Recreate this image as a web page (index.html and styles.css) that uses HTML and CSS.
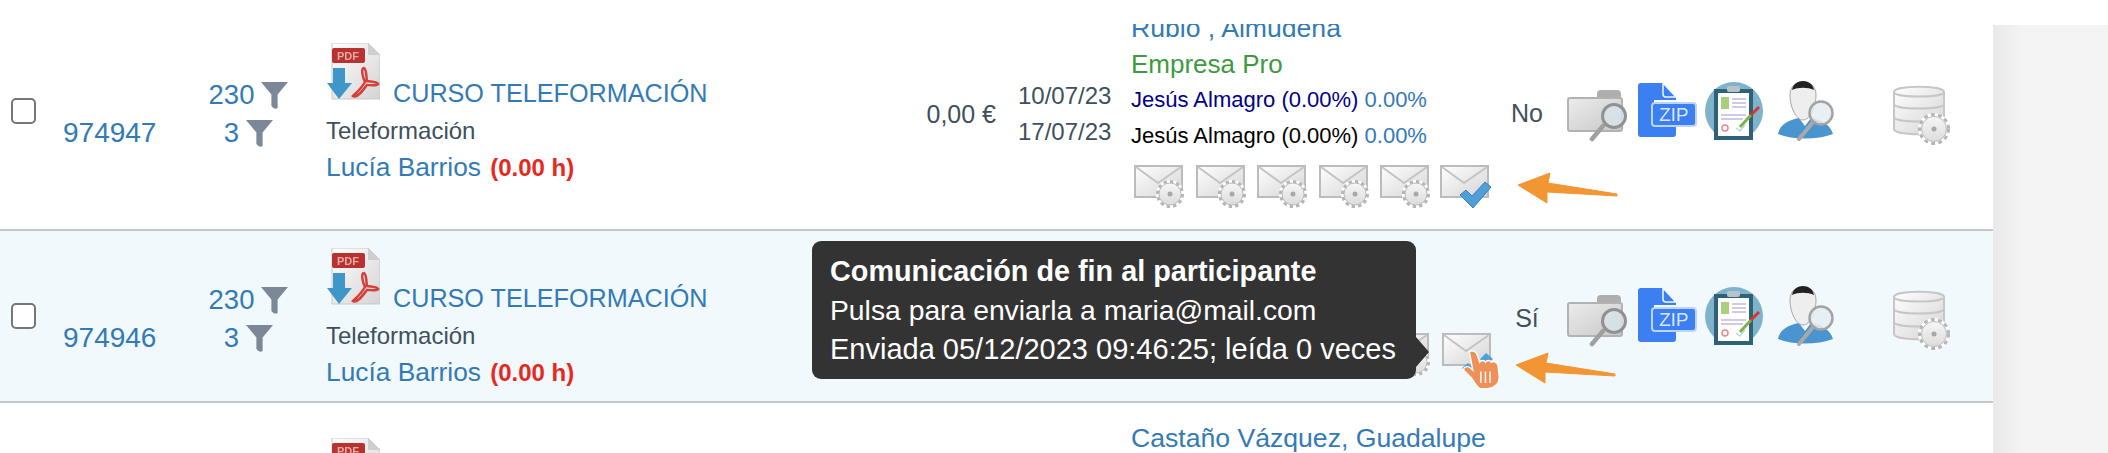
FILE: index.html
```html
<!DOCTYPE html>
<html>
<head>
  <meta charset="UTF-8">
  <title>Cursos</title>
  <link rel="stylesheet" href="styles.css">
</head>
<body>
  <svg class="sprites" width="0" height="0">
    <defs>
      <linearGradient id="paper" x1="0" y1="0" x2="1" y2="1">
        <stop offset="0" stop-color="#ffffff"/>
        <stop offset="1" stop-color="#d4d4d4"/>
      </linearGradient>
      <linearGradient id="metal" x1="0" y1="0" x2="0" y2="1">
        <stop offset="0" stop-color="#f6f6f6"/>
        <stop offset="1" stop-color="#dcdcdc"/>
      </linearGradient>
      <linearGradient id="folder-body" x1="0" y1="0" x2="1" y2="1">
        <stop offset="0" stop-color="#ececec"/>
        <stop offset="1" stop-color="#c8c8c8"/>
      </linearGradient>

      <symbol id="funnel" viewBox="0 0 26 26">
        <path d="M0 0H26L16 12V25Q13 27 10 23V12Z" fill="#7c8797"/>
      </symbol>

      <symbol id="pdf" viewBox="0 0 54 59">
        <path d="M6 0H42L54 12V56H6Z" fill="url(#paper)" stroke="#c9c9c9"/>
        <path d="M42 0V12H54Z" fill="#cfcfcf"/>
        <rect x="6" y="5" width="33" height="15" rx="2" fill="#b8322f"/>
        <text x="22" y="17" class="pdf-label">PDF</text>
        <path d="M7 25H19V40H26L13 56L1 40H7Z" fill="#3f97c9"/>
        <path d="M38 25C35 25 36 33 39 39C35 46 30 50 27 53C31 56 37 47 41 42C45 42 50 43 52 41C50 38 44 39 41 38C40 34 41 27 38 25Z" fill="none" stroke="#d4403a" stroke-width="2.5"/>
      </symbol>

      <symbol id="mail-body" viewBox="0 0 50 43">
        <rect x="1" y="1" width="47" height="31" fill="url(#paper)" stroke="#bcbcbc" stroke-width="2"/>
        <path d="M2 2L24 18L47 2" fill="none" stroke="#c4c4c4" stroke-width="2"/>
      </symbol>

      <symbol id="mail-gear" viewBox="0 0 50 43">
        <use href="#mail-body" width="50" height="43"/>
        <circle cx="36" cy="29" r="14" fill="#ffffff"/>
        <circle cx="36" cy="29" r="12.5" fill="none" stroke="#b5b5b5" stroke-width="3" stroke-dasharray="3.4 3.1"/>
        <circle cx="36" cy="29" r="11" fill="url(#metal)" stroke="#bcbcbc"/>
        <circle cx="36" cy="29" r="2.5" fill="#a8a8a8"/>
      </symbol>

      <symbol id="mail-check" viewBox="0 0 52 43">
        <use href="#mail-body" width="50" height="43"/>
        <path d="M20 30L26 25L32 31L45 17L51 22L33 43Z" fill="#4f9fd8" stroke="#3b7fb5"/>
      </symbol>

      <symbol id="mail-hand" viewBox="0 0 60 56">
        <use href="#mail-body" width="50" height="43"/>
        <path d="M44 20L51 26L44 32L38 26Z" fill="#4f9fd8"/>
        <path d="M26 30L32 35L26 41L20 35Z" fill="#4f9fd8"/>
        <g transform="translate(-6 -3) scale(1.15)">
          <path d="M29 19C32 17 35 19 36 22L38 28C39 26 42 26 43 28C44 26 47 26 48 28C49 27 53 27 54 31L55 41C55 47 50 51 45 51H38C35 49 33 45 31 42L24 35C24 31 29 31 31 34L32 35Z" fill="#ee9159" stroke="#ffffff" stroke-width="1.2"/>
          <path d="M39 36V46M43 36V46M47 36V46" stroke="#ffffff" stroke-width="1.2"/>
        </g>
      </symbol>

      <symbol id="folder" viewBox="0 0 60 66">
        <path d="M30 14Q30 10 34 10H50Q54 10 54 14V20H30Z" fill="#aeaeae"/>
        <rect x="1" y="18" width="54" height="33" rx="2" fill="url(#folder-body)" stroke="#b2b2b2" stroke-width="2"/>
        <path d="M36 46L25 59" stroke="#a0a0a0" stroke-width="4.5" stroke-linecap="round"/>
        <circle cx="47" cy="36" r="11.5" fill="#d7e4ea" fill-opacity="0.8" stroke="#919191" stroke-width="3"/>
      </symbol>

      <symbol id="zip" viewBox="0 0 59 66">
        <path d="M3 3H25L38 17V20H16V41H38V54Q38 57 35 57H3Q0 57 0 54V6Q0 3 3 3Z" fill="#3b7ff2"/>
        <path d="M25 3V14Q25 17 28 17H38Z" fill="#3b7ff2" stroke="#f3f8ff" stroke-width="1.5"/>
        <rect x="14" y="23" width="44" height="23" rx="3" fill="#3b7ff2" stroke="#bcd4fb" stroke-width="2"/>
        <text x="36" y="41" class="zip-label">ZIP</text>
      </symbol>

      <symbol id="clipboard" viewBox="0 0 58 66">
        <circle cx="29" cy="31" r="29" fill="#7fb3cc"/>
        <rect x="9" y="9" width="39" height="51" fill="#2f6278"/>
        <rect x="13" y="13" width="31" height="43" fill="#ffffff"/>
        <rect x="22" y="6" width="13" height="6" rx="2" fill="#b9c4c9"/>
        <rect x="16" y="17" width="8" height="12" fill="#a9cf7d"/>
        <path d="M27 19H41M27 23H41M27 27H41M16 35H41M16 39H38" stroke="#c5b8e0" stroke-width="1.5"/>
        <circle cx="20" cy="48" r="3" fill="none" stroke="#e58a8a" stroke-width="1.5"/>
        <path d="M31 48L35 51L40 45" fill="none" stroke="#c0d6de" stroke-width="1.5"/>
        <path d="M35 47L46 35" stroke="#7cb24a" stroke-width="3"/>
        <path d="M46 35L54 27" stroke="#d9352c" stroke-width="3"/>
      </symbol>

      <symbol id="user" viewBox="0 0 58 66">
        <path d="M1 54C3 44 12 40 22 38L28 46L34 38C44 40 53 44 56 54C40 60 16 60 1 54Z" fill="#4a94cf"/>
        <path d="M13 15C13 6 19 2 26 2C33 2 39 6 39 15C39 27 33 40 26 40C19 40 13 27 13 15Z" fill="#eeeeee" stroke="#a5a5a5"/>
        <path d="M15 10C16 4 21 1 26 1C31 1 36 4 37 10C31 7 21 7 15 10Z" fill="#222222"/>
        <path d="M36 42L22 59" stroke="#a9a9a9" stroke-width="4" stroke-linecap="round"/>
        <circle cx="44" cy="33" r="11.5" fill="#e4edf2" fill-opacity="0.85" stroke="#a3a3a3" stroke-width="2.5"/>
      </symbol>

      <symbol id="db" viewBox="0 0 58 66">
        <path d="M1 12C1 5 51 5 51 12V49C51 56 1 56 1 49Z" fill="url(#paper)" stroke="#c6c6c6" stroke-width="2"/>
        <path d="M1 12C1 18 51 18 51 12M1 24C1 30 51 30 51 24M1 37C1 43 51 43 51 37" fill="none" stroke="#c6c6c6" stroke-width="2"/>
        <circle cx="41" cy="49" r="16" fill="#ffffff"/>
        <circle cx="41" cy="49" r="14.5" fill="none" stroke="#b5b5b5" stroke-width="3" stroke-dasharray="3.8 3.4"/>
        <circle cx="41" cy="49" r="12.5" fill="url(#metal)" stroke="#bcbcbc"/>
        <circle cx="41" cy="49" r="2.5" fill="#a8a8a8"/>
      </symbol>

      <symbol id="arrow" viewBox="0 0 115 40">
        <path d="M8 15L40 3L38 13L107 24V26L37 22L37 33Z" fill="#f29533" stroke="#f29533" stroke-linejoin="round"/>
      </symbol>
    </defs>
  </svg>

  <div class="page">
    <div class="table-wrap">
      <div class="rows">

        <div class="row row-first">
          <div class="cell-check"><input type="checkbox" class="check"></div>
          <div class="cell-id"><a class="link">974947</a></div>
          <div class="cell-counts">
            <div class="count"><a class="link">230</a><svg class="funnel"><use href="#funnel"/></svg></div>
            <div class="count"><a class="link">3</a><svg class="funnel"><use href="#funnel"/></svg></div>
          </div>
          <div class="cell-course">
            <div class="course-title"><svg class="pdf"><use href="#pdf"/></svg> <a class="link">CURSO TELEFORMACIÓN</a></div>
            <div class="course-type">Teleformación</div>
            <div class="course-tutor"><a class="link">Lucía Barrios</a> <span class="hours">(0.00 h)</span></div>
          </div>
          <div class="cell-price">0,00 €</div>
          <div class="cell-dates">
            <div>10/07/23</div>
            <div>17/07/23</div>
          </div>
          <div class="cell-people">
            <div class="person-name"><a class="link">Rubio , Almudena</a></div>
            <div class="person-company">Empresa Pro</div>
            <div class="person-tutor tutor-blue">Jesús Almagro (0.00%) <a class="link">0.00%</a></div>
            <div class="person-tutor">Jesús Almagro (0.00%) <a class="link">0.00%</a></div>
            <div class="mails">
              <svg class="mail"><use href="#mail-gear"/></svg>
              <svg class="mail"><use href="#mail-gear"/></svg>
              <svg class="mail"><use href="#mail-gear"/></svg>
              <svg class="mail"><use href="#mail-gear"/></svg>
              <svg class="mail"><use href="#mail-gear"/></svg>
              <svg class="mail mail-last"><use href="#mail-check"/></svg>
            </div>
          </div>
          <div class="cell-answer">No</div>
          <div class="cell-tools">
            <svg class="tool tool-folder"><use href="#folder"/></svg>
            <svg class="tool tool-zip"><use href="#zip"/></svg>
            <svg class="tool tool-clipboard"><use href="#clipboard"/></svg>
            <svg class="tool tool-user"><use href="#user"/></svg>
            <svg class="tool tool-db"><use href="#db"/></svg>
          </div>
          <svg class="note-arrow arrow-first"><use href="#arrow"/></svg>
        </div>

        <div class="row row-hover">
          <div class="cell-check"><input type="checkbox" class="check"></div>
          <div class="cell-id"><a class="link">974946</a></div>
          <div class="cell-counts">
            <div class="count"><a class="link">230</a><svg class="funnel"><use href="#funnel"/></svg></div>
            <div class="count"><a class="link">3</a><svg class="funnel"><use href="#funnel"/></svg></div>
          </div>
          <div class="cell-course">
            <div class="course-title"><svg class="pdf"><use href="#pdf"/></svg> <a class="link">CURSO TELEFORMACIÓN</a></div>
            <div class="course-type">Teleformación</div>
            <div class="course-tutor"><a class="link">Lucía Barrios</a> <span class="hours">(0.00 h)</span></div>
          </div>
          <div class="cell-price"></div>
          <div class="cell-dates"></div>
          <div class="cell-people people-end">
            <div class="mails">
              <svg class="mail"><use href="#mail-gear"/></svg>
              <svg class="mail"><use href="#mail-gear"/></svg>
              <svg class="mail"><use href="#mail-gear"/></svg>
              <svg class="mail"><use href="#mail-gear"/></svg>
              <svg class="mail"><use href="#mail-gear"/></svg>
              <svg class="mail mail-hand"><use href="#mail-hand"/></svg>
            </div>
          </div>
          <div class="cell-answer">Sí</div>
          <div class="cell-tools">
            <svg class="tool tool-folder"><use href="#folder"/></svg>
            <svg class="tool tool-zip"><use href="#zip"/></svg>
            <svg class="tool tool-clipboard"><use href="#clipboard"/></svg>
            <svg class="tool tool-user"><use href="#user"/></svg>
            <svg class="tool tool-db"><use href="#db"/></svg>
          </div>
          <svg class="note-arrow arrow-second"><use href="#arrow"/></svg>
          <div class="tooltip">
            <div class="tooltip-title">Comunicación de fin al participante</div>
            <div class="tooltip-mail">Pulsa para enviarla a maria@mail.com</div>
            <div class="tooltip-sent">Enviada 05/12/2023 09:46:25; leída 0 veces</div>
          </div>
        </div>

        <div class="row row-last">
          <div class="cell-check"></div>
          <div class="cell-id"></div>
          <div class="cell-counts"></div>
          <div class="cell-course course-top"><svg class="pdf"><use href="#pdf"/></svg></div>
          <div class="cell-price"></div>
          <div class="cell-dates"></div>
          <div class="cell-people">
            <div class="person-name"><a class="link">Castaño Vázquez, Guadalupe</a></div>
          </div>
        </div>

      </div>
    </div>
    <div class="side"></div>
  </div>
</body>
</html>
```

FILE: styles.css
```css
:root {
  --link: #337ab7;
  --text: #3f505c;
  --border: #c6c8ca;
  --hover: #f1f9fd;
}

html, body {
  margin: 0;
  height: 453px;
  overflow: hidden;
  background: white;
}

body {
  font-family: "Liberation Sans", Arial, sans-serif;
  color: var(--text);
}

.sprites {
  position: absolute;
}

.pdf-label {
  font-family: "Liberation Sans", Arial, sans-serif;
  font-size: 11px;
  font-weight: bold;
  fill: #e6a9a4;
  text-anchor: middle;
}

.zip-label {
  font-family: "Liberation Sans", Arial, sans-serif;
  font-size: 19px;
  fill: #dbe8fd;
  text-anchor: middle;
}

.page {
  display: flex;
  height: 453px;
}

.table-wrap {
  width: 1993px;
  height: 429px;
  margin-top: 24px;
  overflow: hidden;
}

.rows {
  margin-top: -31px;
}

.side {
  flex: 1;
  margin-top: 25px;
  background: linear-gradient(to right, #e9e9e9, #f4f4f4 30px);
}

.row {
  position: relative;
  display: grid;
  grid-template-columns: 63px 107px 156px 592px 88px 125px 371px 50px 441px;
  border-bottom: 2px solid var(--border);
}

.row-first { height: 236px; }
.row-hover { height: 170px; background: var(--hover); }
.row-last { height: 198px; border-bottom: 0; }

.link {
  color: var(--link);
  text-decoration: none;
}

.cell-check {
  align-self: center;
  padding-left: 11px;
  display: flex;
}

.check {
  appearance: none;
  width: 25px;
  height: 26px;
  margin: 0;
  background: white;
  border: 2px solid #767676;
  border-radius: 5px;
}

.cell-id {
  align-self: center;
  margin-top: 44px;
  font-size: 28px;
  line-height: 36px;
}

.cell-counts {
  align-self: center;
  margin-top: 6px;
  margin-left: 1px;
  font-size: 27.5px;
}

.count {
  display: flex;
  justify-content: center;
  align-items: center;
  gap: 7px;
  height: 38px;
}

.funnel {
  width: 27px;
  height: 27px;
}

.cell-course {
  align-self: center;
  margin-top: 6px;
  font-size: 26.3px;
  line-height: 37px;
}

.course-title {
  font-size: 25.2px;
  white-space: nowrap;
}

.pdf {
  width: 54px;
  height: 59px;
  margin-right: 6px;
  filter: blur(0.4px);
}

.course-type {
  font-size: 24px;
}

.hours {
  margin-left: 2px;
  color: #e8281e;
  font-size: 24px;
  font-weight: bold;
}

.course-top {
  align-self: start;
  margin-top: 0;
  padding-top: 35px;
}

.cell-price {
  align-self: center;
  margin-top: 6px;
  padding-right: 10px;
  text-align: right;
  font-size: 25px;
}

.cell-dates {
  align-self: center;
  margin-top: 6px;
  padding-left: 12px;
  font-size: 24px;
  line-height: 36px;
}

.cell-people {
  align-self: start;
  padding-top: 17px;
  font-size: 26px;
  line-height: 36px;
  white-space: nowrap;
}

.people-end {
  align-self: end;
  padding-top: 0;
  padding-bottom: 25px;
}

.person-name {
  font-size: 26.6px;
}

.person-company {
  color: #3d9a40;
}

.person-tutor {
  color: #000;
  font-size: 22px;
}

.tutor-blue {
  color: #00008b;
}

.mails {
  display: flex;
  gap: 11.5px;
  margin: 11px 0 0 3px;
  height: 43px;
}

.mail {
  flex: none;
  width: 50px;
  height: 43px;
  filter: blur(0.4px);
}

.mail-last {
  width: 52px;
  margin-left: -2px;
}

.mail-hand {
  width: 60px;
  height: 56px;
}

.cell-answer {
  align-self: center;
  margin-top: 4px;
  text-align: center;
  font-size: 25px;
}

.cell-tools {
  align-self: center;
  display: flex;
  margin-top: 3px;
  padding-left: 15px;
}

.tool {
  flex: none;
  height: 66px;
  filter: blur(0.5px);
}

.tool-folder { width: 60px; }
.tool-zip { width: 59px; margin-left: 11px; }
.tool-clipboard { width: 58px; margin-left: 8px; }
.tool-user { width: 58px; margin-left: 14px; }
.tool-db { width: 58px; margin-left: 58px; }

.note-arrow {
  position: absolute;
  left: 1510px;
  width: 115px;
  height: 40px;
}

.arrow-first { bottom: 19px; }
.arrow-second { bottom: 11px; left: 1508px; }

.tooltip {
  position: absolute;
  left: 812px;
  top: 10px;
  box-sizing: border-box;
  width: 604px;
  height: 138px;
  padding: 11px 18px;
  background: #333;
  border-radius: 9px;
  color: white;
  line-height: 39px;
  white-space: nowrap;
}

.tooltip::after {
  content: "";
  position: absolute;
  left: 100%;
  top: 96px;
  border-style: solid;
  border-width: 15px 0 15px 13px;
  border-color: transparent transparent transparent #333;
}

.tooltip-title {
  font-size: 28.8px;
  font-weight: bold;
}

.tooltip-mail {
  font-size: 28.3px;
}

.tooltip-sent {
  font-size: 29px;
}
```
